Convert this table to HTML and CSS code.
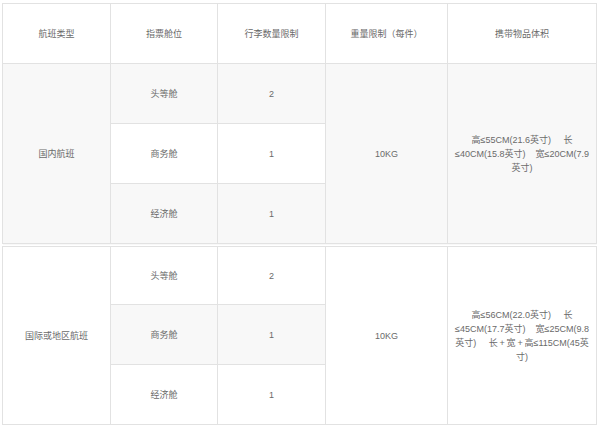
FILE: index.html
```html
<!DOCTYPE html>
<html lang="zh-CN">
<head>
<meta charset="utf-8">
<title>行李限制</title>
<link rel="stylesheet" href="styles.css">
</head>
<body>
<div class="wrap">
<table class="baggage">
  <colgroup>
    <col class="c1"><col class="c2"><col class="c3"><col class="c4"><col class="c5">
  </colgroup>
  <thead>
    <tr>
      <th>航班类型</th>
      <th>指票舱位</th>
      <th>行李数量限制</th>
      <th>重量限制（每件）</th>
      <th>携带物品体积</th>
    </tr>
  </thead>
  <tbody>
    <tr class="odd">
      <td rowspan="3">国内航班</td>
      <td>头等舱</td>
      <td>2</td>
      <td rowspan="3">10KG</td>
      <td rowspan="3" class="size">高≤55CM(21.6英寸)&nbsp;&nbsp;&nbsp;&nbsp;&nbsp;长≤40CM(15.8英寸)&nbsp;&nbsp;&nbsp;&nbsp;宽≤20CM(7.9英寸)</td>
    </tr>
    <tr class="even">
      <td>商务舱</td>
      <td>1</td>
    </tr>
    <tr class="odd">
      <td>经济舱</td>
      <td>1</td>
    </tr>
    <tr class="even group">
      <td rowspan="3">国际或地区航班</td>
      <td>头等舱</td>
      <td>2</td>
      <td rowspan="3">10KG</td>
      <td rowspan="3" class="size">高≤56CM(22.0英寸)&nbsp;&nbsp;&nbsp;&nbsp;&nbsp;长≤45CM(17.7英寸)&nbsp;&nbsp;&nbsp;&nbsp;宽≤25CM(9.8英寸)&nbsp;&nbsp;&nbsp;&nbsp;&nbsp;长&#8239;+&#8239;宽&#8239;+&#8239;高≤115CM(45英寸)</td>
    </tr>
    <tr class="odd">
      <td>商务舱</td>
      <td>1</td>
    </tr>
    <tr class="even">
      <td>经济舱</td>
      <td>1</td>
    </tr>
  </tbody>
</table>
</div>
</body>
</html>
```
FILE: styles.css
```css
html, body {
  margin: 0;
  padding: 0;
  background: #ffffff;
}
.wrap {
  padding: 3px 4px 0 2px;
}
.baggage {
  width: 594px;
  table-layout: fixed;
  border-collapse: collapse;
  font-family: "Liberation Sans", "Noto Sans CJK SC", sans-serif;
  font-size: 9px;
  line-height: 14px;
  color: #6a6a6a;
}
.c1 { width: 108px; }
.c2 { width: 107px; }
.c3 { width: 108px; }
.c4 { width: 122px; }
.c5 { width: 149px; }
.baggage th,
.baggage td {
  border: 1px solid #e2e2e2;
  text-align: center;
  vertical-align: middle;
  font-weight: normal;
  padding: 0 5px;
  height: 59px;
}
.baggage thead tr { background: #ffffff; }
.baggage tr.odd { background: #f8f8f8; }
.baggage tr.even { background: #ffffff; }
.baggage tr.group td {
  border-top: 4px double #e2e2e2;
  height: 57px;
}
.baggage td.size {
  padding: 0 4px;
}
```
